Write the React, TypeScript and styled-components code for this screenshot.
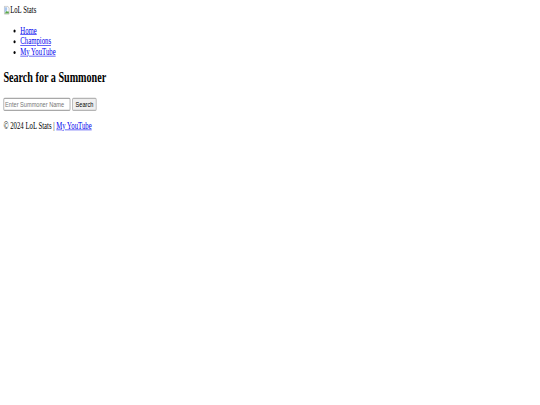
import styled, { createGlobalStyle } from 'styled-components';

const Global = createGlobalStyle`
    html, body {
        margin: 0;
        background: #ffffff;
    }
`;

const Frame = styled.div`
    width: 540px;
    height: 405px;
    overflow: hidden;
`;

/* The page was shot wide and squeezed into the window */
const Page = styled.div`
    width: 1280px;
    height: 675px;
    padding: 8px;
    box-sizing: border-box;
    transform: scale(0.4219, 0.6);
    transform-origin: 0 0;
    font-family: 'Liberation Serif', serif;
    font-size: 16px;
    color: #000000;
`;

const Logo = styled.div`
    display: flex;
    align-items: center;
    height: 18px;
`;

const BrokenImage = styled.svg`
    width: 16px;
    height: 16px;
    flex: none;
`;

const Menu = styled.ul`
    margin: 16px 0;
    padding-left: 40px;
`;

const Link = styled.a`
    color: #0000ee;
    text-decoration: underline;
`;

const Heading = styled.h2`
    margin: 20px 0;
    font-size: 24px;
    font-weight: bold;
`;

const SearchForm = styled.form`
    display: flex;
    gap: 4px;
    height: 22px;
`;

const SearchInput = styled.input`
    width: 159px;
    box-sizing: border-box;
    padding: 1px 2px;
    border: 2px solid #a8a8a8;
    border-radius: 3px;
    font-family: 'Liberation Sans', sans-serif;
    font-size: 13.33px;
    &::placeholder {
        color: #757575;
    }
`;

const SearchButton = styled.button`
    padding: 1px 6px;
    border: 2px solid #b4b4b4;
    border-radius: 3px;
    background: #efefef;
    color: #000000;
    font-family: 'Liberation Sans', sans-serif;
    font-size: 13.33px;
`;

const Footer = styled.p`
    margin: 16px 0;
`;

export default function App() {
    return (
        <Frame>
            <Global />
            <Page>
                <Logo>
                    <BrokenImage viewBox="0 0 16 16">
                        <path d="M2.5 1.5h8l3 3v10h-11z" fill="#ffffff" stroke="#9a9a9a" />
                        <path d="M3 14l4-5 2 2 2-2 2 3v1.5H3z" fill="#5aa64a" />
                        <path d="M3 3h6v5l-3 2-3 2z" fill="#a9c7ef" />
                    </BrokenImage>
                    LoL Stats
                </Logo>
                <nav>
                    <Menu>
                        <li><Link href="#">Home</Link></li>
                        <li><Link href="#">Champions</Link></li>
                        <li><Link href="#">My YouTube</Link></li>
                    </Menu>
                </nav>
                <Heading>Search for a Summoner</Heading>
                <SearchForm onSubmit={(e) => e.preventDefault()}>
                    <SearchInput type="text" placeholder="Enter Summoner Name" />
                    <SearchButton type="submit">Search</SearchButton>
                </SearchForm>
                <Footer>
                    © 2024 LoL Stats | <Link href="#">My YouTube</Link>
                </Footer>
            </Page>
        </Frame>
    );
}
